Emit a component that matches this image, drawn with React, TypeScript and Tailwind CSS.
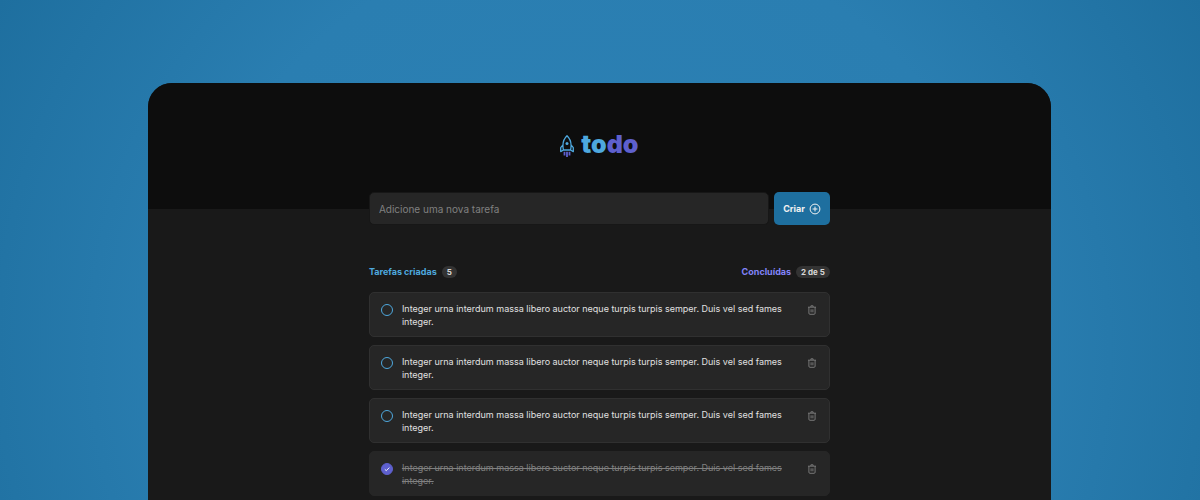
import { useState } from "react";

const TEXT =
  "Integer urna interdum massa libero auctor neque turpis turpis semper. Duis vel sed fames integer.";

const INITIAL_TASKS = [
  { id: 1, text: TEXT, done: false },
  { id: 2, text: TEXT, done: false },
  { id: 3, text: TEXT, done: false },
  { id: 4, text: TEXT, done: true },
  { id: 5, text: TEXT, done: true },
];

function Rocket() {
  return (
    <svg viewBox="0 0 14 22" className="h-[22px] w-[14px]" fill="none" aria-hidden="true">
      <path
        d="M3.500 15C2.200 9.500 3.400 4.200 7 .8c3.600 3.400 4.800 8.700 3.500 14.200M3 9.800.7 12.600v4l2.800-1.600h7l2.800 1.600v-4L11 9.800"
        stroke="#4EA8DE"
        strokeWidth="1.300"
        strokeLinejoin="round"
        strokeLinecap="round"
      />
      <circle cx="7" cy="8.600" r="1.500" fill="#4EA8DE" />
      <path d="M4.500 16.800v3.700M7 16.800v5.200M9.500 16.800v3.700" stroke="#5E60CE" strokeWidth="1.800" />
    </svg>
  );
}

function PlusCircle() {
  return (
    <svg viewBox="0 0 12 12" className="size-3" fill="none" stroke="currentColor" aria-hidden="true">
      <circle cx="6" cy="6" r="4.900" />
      <path d="M6 3.600v4.800M3.600 6h4.800" />
    </svg>
  );
}

function Trash() {
  return (
    <svg viewBox="0 0 10 10" className="size-[10px]" fill="none" stroke="currentColor" strokeWidth="0.9" aria-hidden="true">
      <path d="M1 2.200h8M1.900 2.200v6q0 1.100 1.100 1.100h4q1.100 0 1.100-1.100v-6M3.900 2V.8h2.200V2M4.100 4.300v3M5.900 4.300v3" />
    </svg>
  );
}

function Check() {
  return (
    <svg viewBox="0 0 12 12" className="pointer-events-none col-start-1 row-start-1 size-3" fill="none" aria-hidden="true">
      <path d="M3.800 6.300 5.300 7.700 8.300 4.600" stroke="#F2F2F2" strokeWidth="1" />
    </svg>
  );
}

export default function App() {
  const [tasks, setTasks] = useState(INITIAL_TASKS);
  const [draft, setDraft] = useState("");
  const done = tasks.filter((t) => t.done).length;

  const addTask = (e: React.FormEvent) => {
    e.preventDefault();
    if (!draft.trim()) return;
    setTasks([...tasks, { id: Date.now(), text: draft, done: false }]);
    setDraft("");
  };
  const toggle = (id: number) =>
    setTasks(tasks.map((t) => (t.id === id ? { ...t, done: !t.done } : t)));

  return (
    <div className="h-screen overflow-hidden bg-[radial-gradient(circle_at_50%_70%,#2c81b5_0%,#2a7eb1_60%,#1e6f9f_100%)] pt-[83px] pr-[12.4%] pl-[12.3%] font-['Inter',sans-serif]">
      <div className="min-h-full overflow-hidden rounded-t-3xl bg-[#191919]">
        <header className="flex h-[126px] items-center justify-center gap-[7px] bg-[#0d0d0d]">
          <Rocket />
          <h1 className="pb-1 text-[25px] leading-7 font-black text-[#4ea8de]">
            to<span className="text-[#5e60ce]">do</span>
          </h1>
        </header>

        <main className="mx-auto w-full max-w-[461px]">
          <form onSubmit={addTask} className="-mt-[17px] flex gap-[5px]">
            <input
              aria-label="Nova tarefa"
              placeholder="Adicione uma nova tarefa"
              value={draft}
              onChange={(e) => setDraft(e.target.value)}
              className="h-[33px] min-w-0 flex-1 rounded-[5px] border border-[#171717] bg-[#262626] px-[9px] text-[10px] text-[#f2f2f2] outline-none placeholder:text-[#808080]"
            />
            <button
              type="submit"
              className="flex h-[33px] items-center gap-1 rounded-[5px] bg-[#1e6f9f] px-[9px] text-[9px] font-bold text-[#f2f2f2]"
            >
              Criar
              <PlusCircle />
            </button>
          </form>

          <div className="mt-[41px] flex justify-between text-[9px] leading-3 font-bold">
            <p className="flex items-center gap-[5px] text-[#4ea8de]">
              Tarefas criadas
              <span className="rounded-full bg-[#333333] px-[5px] text-[8px] text-[#d9d9d9]">{tasks.length}</span>
            </p>
            <p className="flex items-center gap-[5px] text-[#8284fa]">
              Concluídas
              <span className="rounded-full bg-[#333333] px-[5px] text-[8px] text-[#d9d9d9]">
                {done} de {tasks.length}
              </span>
            </p>
          </div>

          <ul className="mt-[14px] flex flex-col gap-2">
            {tasks.map((task) => (
              <li
                key={task.id}
                className={`flex h-[45px] items-start gap-[9px] rounded-[5px] border bg-[#262626] pt-[9px] pr-3 pl-[11px] ${
                  task.done ? "border-[#262626]" : "border-[#303030]"
                }`}
              >
                <span className="mt-[2px] grid size-3 shrink-0">
                  <input
                    id={`task-${task.id}`}
                    type="checkbox"
                    checked={task.done}
                    onChange={() => toggle(task.id)}
                    className="col-start-1 row-start-1 size-3 appearance-none rounded-full border border-[#4ea8de] checked:border-[#5e60ce] checked:bg-[#5e60ce]"
                  />
                  {task.done && <Check />}
                </span>
                <label
                  htmlFor={`task-${task.id}`}
                  className={`flex-1 text-[9px] leading-[13px] ${
                    task.done ? "text-[#808080] line-through" : "text-[#e0e0e0]"
                  }`}
                >
                  {task.text}
                </label>
                <button
                  type="button"
                  aria-label="Excluir tarefa"
                  onClick={() => setTasks(tasks.filter((t) => t.id !== task.id))}
                  className="mt-[3px] ml-3 shrink-0 text-[#808080]"
                >
                  <Trash />
                </button>
              </li>
            ))}
          </ul>
        </main>
      </div>
    </div>
  );
}
